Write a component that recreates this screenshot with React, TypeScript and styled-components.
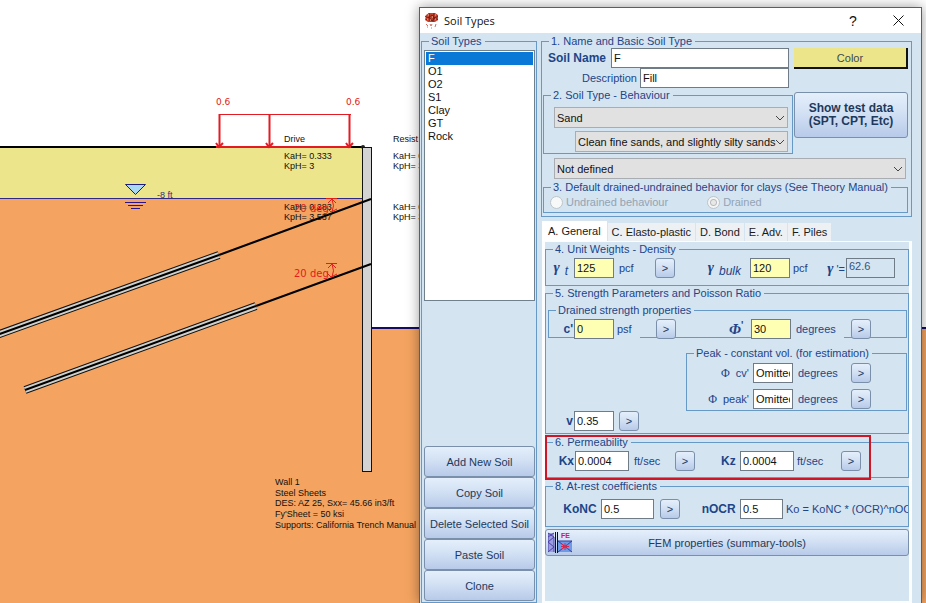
import React from "react";
import styled, { createGlobalStyle, css } from "styled-components";

const ink = "#1d4588";
const face = "#d5e4f1";
const line = "#6699c6";

const GlobalStyle = createGlobalStyle`
  * { box-sizing: border-box; }
  body { margin: 0; background: #fff; font-family: "Liberation Sans", Arial, sans-serif; font-size: 11px; }
  button, input, select { font: inherit; margin: 0; }
`;

const Stage = styled.main`
  position: relative;
  height: 100vh;
  overflow: hidden;
`;

const Scene = styled.svg`
  display: block;
  width: 100%;
  height: 100%;
  font-family: "Liberation Sans", Arial, sans-serif;
  font-size: 9px;
`;

const Dialog = styled.section`
  position: absolute;
  top: 7px;
  right: 4px;
  bottom: 0;
  width: 503px;
  display: flex;
  flex-direction: column;
  background: ${face};
  border: 1px solid #4f6273;
  border-bottom: 0;
  box-shadow: 0 0 12px rgba(0, 0, 0, 0.4);
  color: ${ink};
`;

const TitleBar = styled.header`
  display: flex;
  align-items: center;
  height: 25px;
  padding: 0 15px 0 4px;
  background: #fff;
  color: #111;
`;

const Title = styled.h1`
  flex: 1;
  margin: 0 0 0 5px;
  font: 400 11px "Open Sans", sans-serif;
`;

const TitleButton = styled.button`
  display: grid;
  place-items: center;
  width: 16px;
  height: 20px;
  margin-left: 29px;
  padding: 0;
  border: 0;
  background: none;
  color: #111;
  font-size: 14px;
`;

const Body = styled.div`
  flex: 1;
  min-height: 0;
  display: flex;
  gap: 4px;
  padding: 1px 9px 0 1px;
`;

const Group = styled.fieldset`
  min-width: 0;
  margin: 0;
  padding: 0;
  border: 1px solid ${line};
`;

const Legend = styled.legend`
  margin-left: 7px;
  padding: 0 3px 0 2px;
  line-height: 14px;
  white-space: nowrap;
`;

const SoilGroup = styled(Group)`
  width: 116px;
  height: 100%;
`;

const SoilStack = styled.div`
  display: flex;
  flex-direction: column;
  height: 100%;
  padding: 2px 1px 1px 2px;
`;

const SoilList = styled.ul`
  height: 251px;
  margin: 0 0 auto;
  padding: 1px;
  list-style: none;
  background: #fff;
  border: 1px solid #70808c;
`;

const SoilItem = styled.li<{ $selected?: boolean }>`
  padding-left: 2px;
  line-height: 13px;
  color: ${(p) => (p.$selected ? "#fff" : "#111")};
  background: ${(p) => (p.$selected ? "#0a78d6" : "none")};
`;

const raised = css`
  border: 1px solid #7a8fa9;
  border-radius: 3px;
  background: linear-gradient(#e4effb, #d3e1f4 45%, #b7cae9);
  color: #1e395b;
`;

const ActionButton = styled.button`
  ${raised}
  height: 31px;
  padding: 0;
  white-space: nowrap;
`;

const Main = styled.div`
  flex: 1;
  min-width: 0;
  display: flex;
  flex-direction: column;
`;

const BasicBody = styled.div`
  display: grid;
  grid-template-columns: 1fr 114px;
  column-gap: 1px;
  padding: 0 3px 3px 1px;
`;

const Column = styled.div`
  min-width: 0;
`;

const NameRow = styled.div`
  display: flex;
  justify-content: flex-end;
  align-items: center;
  gap: 3px;
  height: 20px;
  padding-right: 4px;
`;

const NameLabel = styled.label<{ $strong?: boolean }>`
  margin-right: ${(p) => (p.$strong ? 2 : 0)}px;
  font-size: ${(p) => (p.$strong ? 12 : 11)}px;
  font-weight: ${(p) => (p.$strong ? 700 : 400)};
`;

const Field = styled.input<{ $w?: number; $tone?: "yellow" | "face" }>`
  width: ${(p) => p.$w ?? 40}px;
  height: 20px;
  padding: 0 2px;
  border: 1px solid #6f7c87;
  border-radius: 0;
  background: ${(p) =>
    p.$tone === "yellow" ? "#ffffb4" : p.$tone === "face" ? face : "#fff"};
  color: ${(p) => (p.$tone === "face" ? "#33557f" : "#111")};
`;

const ResultField = styled(Field)`
  padding-bottom: 4px;
`;

const BehaviourBody = styled.div`
  display: flex;
  flex-direction: column;
  gap: 3px;
  padding: 5px 4px 1px 10px;
`;

const SelectBox = styled.div<{ $indent?: number }>`
  display: grid;
  align-items: center;
  height: 21px;
  margin-left: ${(p) => p.$indent ?? 0}px;
  & > * { grid-area: 1 / 1; }
  svg { justify-self: end; margin-right: 3px; pointer-events: none; }
`;

const Select = styled.select`
  appearance: none;
  width: 100%;
  min-width: 0;
  height: 21px;
  padding: 0 0 0 2px;
  border: 1px solid #a9adb1;
  border-radius: 0;
  background: #e1e1e1;
  color: #111;
`;

const ColorButton = styled.button`
  height: 21px;
  width: 100%;
  padding: 0;
  border: 0;
  border-right: 2px solid #111;
  border-bottom: 2px solid #111;
  background: #ede58a;
  color: #3b4a50;
`;

const TestButton = styled.button`
  ${raised}
  width: 100%;
  height: 46px;
  margin-top: 23px;
  padding: 0;
  font-size: 12px;
  font-weight: 700;
  line-height: 13px;
`;

const ClayArea = styled.div`
  grid-column: 1 / -1;
  padding-top: 4px;
`;

const ClaySelect = styled.div`
  padding: 0 2px 1px 11px;
`;

const RadioRow = styled.div`
  display: flex;
  gap: 39px;
  height: 18px;
  padding: 0 6px 2px;
`;

const RadioLabel = styled.label`
  display: flex;
  align-items: center;
  gap: 3px;
  color: #93a3b3;
`;

const Radio = styled.input`
  appearance: none;
  width: 13px;
  height: 13px;
  margin: 0;
  border: 1px solid #bcc5cc;
  border-radius: 50%;
  background: #f7f8f8;
  &:checked { background: radial-gradient(circle, #e8e8e6 2px, #b5bbc0 3px, #f4f4f4 4px); }
`;

const Tabs = styled.div`
  display: flex;
  align-items: flex-end;
  gap: 1px;
  height: 20px;
  margin: 4px 0 0 1px;
`;

const Tab = styled.button<{ $active?: boolean }>`
  height: ${(p) => (p.$active ? 20 : 18)}px;
  padding: 0 ${(p) => (p.$active ? 6 : 4)}px;
  border: 0;
  background: ${(p) => (p.$active ? "#fff" : "#edf1f4")};
  color: #1b1b1b;
  white-space: nowrap;
`;

const Panel = styled.div`
  flex: 1;
  display: flex;
  flex-direction: column;
  margin-left: 1px;
  border: solid #fbfdff;
  border-width: 1px 3px 2px;
`;

const Row = styled.div<{ $cols: string }>`
  display: grid;
  grid-template-columns: ${(p) => p.$cols};
  align-items: center;
  height: 20px;
`;

const Caption = styled.label<{ $strong?: boolean }>`
  padding-right: 1px;
  text-align: right;
  font-size: ${(p) => (p.$strong ? 12 : 11)}px;
  font-weight: ${(p) => (p.$strong ? 700 : 400)};
  white-space: nowrap;
`;

const SplitCaption = styled.div`
  display: flex;
  justify-content: space-between;
  align-items: center;
`;

const Greek = styled.span`
  font: italic 700 15px "Liberation Serif", serif;
`;

const Phi = styled.span`
  margin-right: 6px;
  font: 400 12px "Liberation Serif", serif;
`;

const Sub = styled.sub<{ $tail?: number }>`
  margin: 0 ${(p) => p.$tail ?? 5}px 0 5px;
  font-size: 12px;
  font-style: italic;
  line-height: 1;
`;

const Unit = styled.span<{ $pad?: number; $mask?: boolean }>`
  justify-self: start;
  padding-left: ${(p) => p.$pad ?? 5}px;
  padding-right: ${(p) => (p.$mask ? 8 : 0)}px;
  background: ${(p) => (p.$mask ? face : "none")};
  line-height: 20px;
  white-space: nowrap;
`;

const MoreButton = styled.button`
  ${raised}
  width: 20px;
  height: 20px;
  padding: 0;
`;

const DensityBody = styled.div`
  padding: 2px 0 7px;
`;

const StrengthBody = styled.div`
  padding: 3px 1px 2px 2px;
`;

const DrainedBody = styled.div`
  height: 20px;
  padding-top: 2px;
`;

const PeakGroup = styled(Group)`
  width: 221px;
  margin: 8px 0 0 auto;
`;

const PeakBody = styled.div`
  display: flex;
  flex-direction: column;
  gap: 6px;
  padding: 3px 0 1px;
`;

const Marked = styled.div`
  position: relative;
  margin-top: 1px;
`;

const Highlight = styled.div`
  position: absolute;
  inset: 0 38px -2px 0;
  border: 2px solid #cf1626;
  pointer-events: none;
`;

const PermeabilityBody = styled.div`
  padding: 2px 0 6px;
`;

const RestGroup = styled(Group)`
  margin-top: 1px;
`;

const RestBody = styled.div`
  padding: 6px 0 7px;
  overflow: hidden;
`;

const FemButton = styled.button`
  ${raised}
  display: grid;
  grid-template-columns: 24px 1fr 24px;
  align-items: center;
  height: 27px;
  margin-top: 2px;
  padding: 0 2px;
`;

const Chevron = () => (
  <svg width="10" height="6" viewBox="0 0 10 6" fill="none" stroke="#444" aria-hidden="true">
    <path d="M1 1l4 4 4-4" />
  </svg>
);

const AppIcon = () => (
  <svg width="15" height="17" viewBox="0 0 15 17" aria-hidden="true">
    <path d="M2 3l3-2h6l3 2v5l-3 2H4L1 8z" fill="#c2432f" />
    <path d="M1 4l3 2 4-3 3 3 3-2M2 8l3-3 3 4 3-3 3 2M5 1l1 8M10 1L9 10" stroke="#74211a" fill="none" />
    <path d="M4 3h1M8 5h1M3 7h1M11 7h1M11 3h1M6 8h1" stroke="#f8c19c" />
    <path d="M2 12l2 2M6 12l1 2 1-2M12 12l-1 3M3 15h1M7 16h1" stroke="#d66d60" fill="none" />
  </svg>
);

const FemIcon = () => (
  <svg width="24" height="21" viewBox="0 0 24 21" aria-hidden="true">
    <path d="M0 1h6v19H0z" fill="#9a9de0" />
    <path d="M0 1l6 4-6 5 6 5-6 5M6 1L0 5M6 5v15M0 1v19" stroke="#4a3fa8" fill="none" />
    <path d="M7.500 0v21M9.500 0v21" stroke="#111" />
    <path d="M10 9h14v11H10z" fill="#6c9be8" />
    <path d="M10 9l14 11M24 9L10 20M10 9h14" stroke="#353da0" fill="none" />
    <path d="M13 14.500h8M17 11v7M14 12l6 5M20 12l-6 5" stroke="#d8284c" />
    <text x="13" y="6" fontSize="7" fontWeight="700" fill="#d32038">FE</text>
  </svg>
);

const More = ({ of }: { of: string }) => (
  <MoreButton type="button" aria-label={`More about ${of}`}>&gt;</MoreButton>
);

const coefficients = [
  { x: 284, y: 159, rows: ["KaH= 0.333", "KpH= 3"] },
  { x: 284, y: 210, rows: ["KaH= 0.283", "KpH= 3.537"] },
  { x: 393, y: 159, rows: ["KaH= 0.333", "KpH= 3"] },
  { x: 393, y: 210, rows: ["KaH= 0.283", "KpH= 3.537"] },
];

const wallNotes = [
  "Wall 1",
  "Steel Sheets",
  "DES: AZ 25, Sxx= 45.66 in3/ft",
  "Fy'Sheet = 50 ksi",
  "Supports: California Trench Manual",
];

const Excavation = () => (
  <Scene role="img" aria-label="Excavation section with wall, surcharge and anchors">
    <rect x="0" y="147" width="366" height="52" fill="#ede58c" />
    <rect x="0" y="199" width="366" height="100%" fill="#f4a460" />
    <rect x="366" y="328" width="100%" height="100%" fill="#f4a460" />
    <path d="M0 147h363" stroke="#000" strokeWidth="2" />
    <path d="M0 198.500h363" stroke="#2c2a86" />
    <rect x="371" y="327" width="100%" height="2" fill="#120c66" />
    <circle cx="363" cy="147" r="2" fill="#222" />
    <rect x="362.500" y="147.500" width="9" height="324" fill="#d3d3d3" stroke="#111" />

    <g fill="none">
      <path d="M371 199L219 255M371 264L256 306" stroke="#000" strokeWidth="2" />
      <path d="M219 255L-6 336M256 306L25 390" stroke="#111" strokeWidth="8" />
      <path d="M219 255L-6 336M256 306L25 390" stroke="#cfcfcb" strokeWidth="6" />
      <path d="M219 255L-6 336M256 306L25 390" stroke="#000" strokeWidth="2" />
    </g>

    <g stroke="#e31b23" fill="none">
      <path d="M219 114.500h132" />
      <path d="M219.500 114v33M269.500 114v33M349.500 114v33" strokeWidth="2" />
      <path d="M216 147h135" strokeWidth="2" />
      <path d="M216 143l3 4 4-4M266 143l3 4 4-4M346 143l3 4 4-4" strokeWidth="2" />
    </g>

    <path d="M125.500 184.500h20l-10 10z" fill="#a9d8f3" stroke="#1b1b84" />
    <path d="M125 202.500h21M128 205.500h15M131 208.500h9" stroke="#2a168c" />
    <text x="157" y="198" fill="#2b2d7c">-8 ft</text>

    <g fill="#111">
      <text x="284" y="142">Drive</text>
      <text x="393" y="142">Resist</text>
      {coefficients.map((c) =>
        c.rows.map((row, i) => (
          <text key={`${c.x}-${c.y}-${i}`} x={c.x} y={c.y + i * 10}>{row}</text>
        ))
      )}
      {wallNotes.map((note, i) => (
        <text key={note} x="275" y={485 + i * 11 - (i > 1 ? 1 : 0)}>{note}</text>
      ))}
    </g>

    <g fill="#e0201c" fontFamily="DejaVu Sans, sans-serif" fontSize="9">
      <text x="216" y="105">0.6</text>
      <text x="346" y="105">0.6</text>
      <text x="294" y="212" fontSize="10">20 deg</text>
      <text x="294" y="277" fontSize="10">20 deg</text>
    </g>
    {[198, 263].map((y) => (
      <path
        key={y}
        d={`M326 ${y}.5h11M332 ${y + 1}q3 7 0 13M328 ${y + 5}l4-4 4 4M327 ${y + 10}l4 4 6-3`}
        stroke="#e0201c"
        fill="none"
      />
    ))}
  </Scene>
);

const soils = ["F", "O1", "O2", "S1", "Clay", "GT", "Rock"];
const actions = ["Add New Soil", "Copy Soil", "Delete Selected Soil", "Paste Soil", "Clone"];
const tabs = ["A. General", "C. Elasto-plastic", "D. Bond", "E. Adv.", "F. Piles"];

const BasicSoil = () => (
  <Group>
    <Legend>1. Name and Basic Soil Type</Legend>
    <BasicBody>
      <Column>
        <NameRow>
          <NameLabel $strong htmlFor="name">Soil Name</NameLabel>
          <Field id="name" $w={178} defaultValue="F" />
        </NameRow>
        <NameRow>
          <NameLabel htmlFor="description">Description</NameLabel>
          <Field id="description" $w={149} defaultValue="Fill" />
        </NameRow>
        <Group>
          <Legend>2. Soil Type - Behaviour</Legend>
          <BehaviourBody>
            <SelectBox>
              <Select aria-label="Soil type"><option>Sand</option></Select>
              <Chevron />
            </SelectBox>
            <SelectBox $indent={21}>
              <Select aria-label="Behaviour">
                <option>Clean fine sands, and slightly silty sands</option>
              </Select>
              <Chevron />
            </SelectBox>
          </BehaviourBody>
        </Group>
      </Column>
      <Column>
        <ColorButton type="button">Color</ColorButton>
        <TestButton type="button">Show test data<br />(SPT, CPT, Etc)</TestButton>
      </Column>
      <ClayArea>
        <ClaySelect>
          <SelectBox>
            <Select aria-label="Subtype"><option>Not defined</option></Select>
            <Chevron />
          </SelectBox>
        </ClaySelect>
        <Group>
          <Legend>3. Default drained-undrained behavior for clays (See Theory Manual)</Legend>
          <RadioRow>
            <RadioLabel><Radio type="radio" name="drainage" disabled />Undrained behaviour</RadioLabel>
            <RadioLabel><Radio type="radio" name="drainage" disabled defaultChecked />Drained</RadioLabel>
          </RadioRow>
        </Group>
      </ClayArea>
    </BasicBody>
  </Group>
);

const General = () => (
  <Panel>
    <Group>
      <Legend>4. Unit Weights - Density</Legend>
      <DensityBody>
        <Row $cols="28px 40px 41px 20px 75px 40px 56px 49px">
          <Caption htmlFor="gt"><Greek>γ</Greek><Sub>t</Sub></Caption>
          <Field id="gt" $tone="yellow" defaultValue="125" />
          <Unit>pcf</Unit>
          <More of="total unit weight" />
          <Caption htmlFor="gb"><Greek>γ</Greek><Sub $tail={8}>bulk</Sub></Caption>
          <Field id="gb" $tone="yellow" defaultValue="120" />
          <SplitCaption>
            <Unit $pad={3}>pcf</Unit>
            <Caption htmlFor="ge"><Greek>γ</Greek> '=</Caption>
          </SplitCaption>
          <ResultField id="ge" $w={49} $tone="face" readOnly defaultValue="62.6" />
        </Row>
      </DensityBody>
    </Group>
    <Group>
      <Legend>5. Strength Parameters and Poisson Ratio</Legend>
      <StrengthBody>
        <Group>
          <Legend>Drained strength properties</Legend>
          <DrainedBody>
            <Row $cols="25px 40px 42px 20px 75px 40px 60px 20px">
              <Caption $strong htmlFor="c">c'</Caption>
              <Field id="c" $tone="yellow" defaultValue="0" />
              <Unit $pad={3} $mask>psf</Unit>
              <More of="cohesion" />
              <Caption $strong htmlFor="phi"><Greek>Φ</Greek><sup>'</sup>&nbsp;&nbsp;</Caption>
              <Field id="phi" $tone="yellow" defaultValue="30" />
              <Unit $mask>degrees</Unit>
              <More of="friction angle" />
            </Row>
          </DrainedBody>
        </Group>
        <PeakGroup>
          <Legend>Peak - constant vol. (for estimation)</Legend>
          <PeakBody>
            <Row $cols="66px 40px 58px 20px">
              <Caption htmlFor="cv"><Phi>Φ</Phi>cv'&nbsp;</Caption>
              <Field id="cv" defaultValue="Omitted" />
              <Unit>degrees</Unit>
              <More of="constant volume angle" />
            </Row>
            <Row $cols="66px 40px 58px 20px">
              <Caption htmlFor="peak"><Phi>Φ</Phi>peak'&nbsp;</Caption>
              <Field id="peak" defaultValue="Omitted" />
              <Unit>degrees</Unit>
              <More of="peak angle" />
            </Row>
          </PeakBody>
        </PeakGroup>
        <Row $cols="26px 45px 20px">
          <Caption $strong htmlFor="nu">v</Caption>
          <Field id="nu" defaultValue="0.35" />
          <More of="Poisson ratio" />
        </Row>
      </StrengthBody>
    </Group>
    <Marked>
      <Group>
        <Legend>6. Permeability</Legend>
        <PermeabilityBody>
          <Row $cols="29px 54px 46px 20px 45px 54px 47px 20px">
            <Caption $strong htmlFor="kx">Kx</Caption>
            <Field id="kx" $w={54} defaultValue="0.0004" />
            <Unit>ft/sec</Unit>
            <More of="Kx" />
            <Caption $strong htmlFor="kz">Kz&nbsp;</Caption>
            <Field id="kz" $w={54} defaultValue="0.0004" />
            <Unit $pad={3}>ft/sec</Unit>
            <More of="Kz" />
          </Row>
        </PermeabilityBody>
      </Group>
      <Highlight />
    </Marked>
    <RestGroup>
      <Legend>8. At-rest coefficients</Legend>
      <RestBody>
        <Row $cols="55px 59px 20px 60px 43px auto">
          <Caption $strong htmlFor="konc">KoNC&nbsp;</Caption>
          <Field id="konc" $w={53} defaultValue="0.5" />
          <More of="KoNC" />
          <Caption $strong htmlFor="nocr">nOCR&nbsp;</Caption>
          <Field id="nocr" $w={43} defaultValue="0.5" />
          <Unit $pad={3}>Ko = KoNC * (OCR)^nOCR</Unit>
        </Row>
      </RestBody>
    </RestGroup>
    <FemButton type="button">
      <FemIcon />
      <span>FEM properties (summary-tools)</span>
    </FemButton>
  </Panel>
);

export default function App() {
  return (
    <Stage>
      <GlobalStyle />
      <Excavation />
      <Dialog role="dialog" aria-labelledby="title">
        <TitleBar>
          <AppIcon />
          <Title id="title">Soil Types</Title>
          <TitleButton type="button" aria-label="Help">?</TitleButton>
          <TitleButton type="button" aria-label="Close">
            <svg width="11" height="11" viewBox="0 0 11 11" stroke="#111" aria-hidden="true">
              <path d="M0.500 0.500l10 10M10.500 0.500l-10 10" />
            </svg>
          </TitleButton>
        </TitleBar>
        <Body>
          <SoilGroup>
            <Legend>Soil Types</Legend>
            <SoilStack>
              <SoilList>
                {soils.map((soil, i) => (
                  <SoilItem key={soil} $selected={i === 0}>{soil}</SoilItem>
                ))}
              </SoilList>
              {actions.map((a) => (
                <ActionButton type="button" key={a}>{a}</ActionButton>
              ))}
            </SoilStack>
          </SoilGroup>
          <Main>
            <BasicSoil />
            <Tabs role="tablist">
              {tabs.map((t, i) => (
                <Tab type="button" role="tab" key={t} aria-selected={i === 0} $active={i === 0}>{t}</Tab>
              ))}
            </Tabs>
            <General />
          </Main>
        </Body>
      </Dialog>
    </Stage>
  );
}
